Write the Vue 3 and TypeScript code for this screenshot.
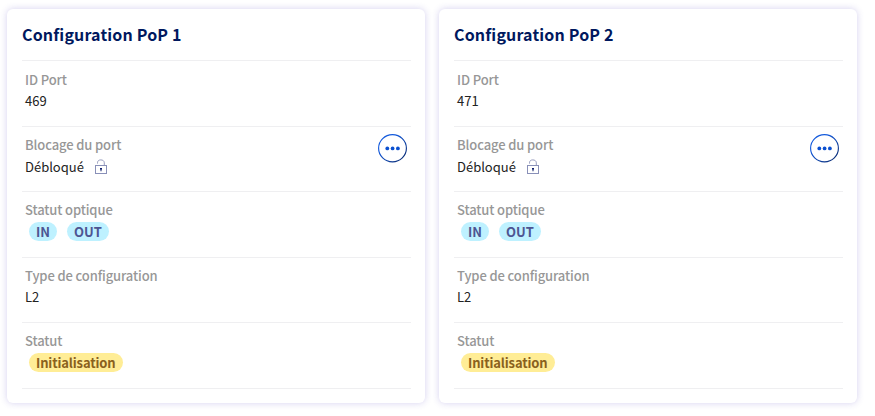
<script setup lang="ts">
interface PopConfig {
  name: string
  portId: string
}

const configs: PopConfig[] = [
  { name: 'Configuration PoP 1', portId: '469' },
  { name: 'Configuration PoP 2', portId: '471' },
]
</script>

<template>
  <main class="board">
    <section v-for="config in configs" :key="config.name" class="card">
      <h2 class="title">{{ config.name }}</h2>
      <dl class="rows">
        <div class="row">
          <div class="field">
            <dt>ID Port</dt>
            <dd>{{ config.portId }}</dd>
          </div>
        </div>
        <div class="row">
          <div class="field">
            <dt>Blocage du port</dt>
            <dd class="state">
              <span>Débloqué</span>
              <svg class="lock" width="14" height="16" viewBox="0 0 14 16" fill="none">
                <path d="M3.5 4.6V3.8C3.5 1.9 4.8.9 6.8.9s3.5 1.1 3.5 2.9V6" stroke="#8b91b8" stroke-width=".9" />
                <rect x="1.5" y="6.5" width="11" height="8" stroke="#8990b8" />
                <path d="M6 9h2v1.6h-.5v1.7h-1v-1.7H6z" fill="#10206e" />
              </svg>
            </dd>
          </div>
          <button class="more" type="button" aria-label="Actions">
            <svg width="29" height="29" viewBox="0 0 29 29">
              <defs>
                <linearGradient id="ring" x1="0" y1="0" x2="1" y2="1">
                  <stop offset=".3" stop-color="#1259dc" />
                  <stop offset="1" stop-color="#0a2766" />
                </linearGradient>
              </defs>
              <ellipse cx="14.5" cy="14.2" rx="13.9" ry="13.6" fill="#fff" stroke="url(#ring)" stroke-width="1.15" />
              <g fill="#0b50d0">
                <circle cx="9.3" cy="14.4" r="1.9" />
                <circle cx="14.6" cy="14.4" r="1.9" />
                <circle cx="19.9" cy="14.4" r="1.9" />
              </g>
            </svg>
          </button>
        </div>
        <div class="row">
          <div class="field">
            <dt>Statut optique</dt>
            <dd class="badges">
              <span class="badge info">IN</span>
              <span class="badge info">OUT</span>
            </dd>
          </div>
        </div>
        <div class="row">
          <div class="field">
            <dt>Type de configuration</dt>
            <dd>L2</dd>
          </div>
        </div>
        <div class="row">
          <div class="field">
            <dt>Statut</dt>
            <dd class="badges"><span class="badge warning">Initialisation</span></dd>
          </div>
        </div>
      </dl>
    </section>
  </main>
</template>

<style>
body {
  margin: 0;
  background: #fff;
}
</style>

<style scoped>
.board {
  box-sizing: border-box;
  height: 416px;
  padding: 9px 0 13px 7px;
  display: flex;
  gap: 14px;
  overflow: hidden;
  font-family: "Noto Sans CJK SC", "Noto Sans", sans-serif;
}
.card {
  box-sizing: border-box;
  width: 418px;
  height: 394px;
  padding: 0 14px 0 15px;
  background: #fff;
  border-radius: 6px;
  box-shadow: 0 0 7px rgba(75, 60, 190, .24);
}
.title {
  box-sizing: border-box;
  height: 51px;
  margin: 0;
  font-size: 16px;
  letter-spacing: .16px;
  line-height: 50px;
  font-weight: 700;
  color: #00185e;
}
.rows {
  margin: 0;
  border-bottom: 1px solid #efeff1;
}
.row {
  box-sizing: border-box;
  height: 65.6px;
  padding: 7px 4px 0 3px;
  border-top: 1px solid #efeff1;
  display: flex;
  justify-content: space-between;
  align-items: flex-start;
}
.row:first-child {
  padding-top: 7.5px;
}
dt {
  height: 21.5px;
  line-height: 21px;
  font-size: 13px;
  letter-spacing: -.12px;
  font-weight: 500;
  color: #979797;
}
dd {
  height: 22px;
  margin: 0;
  display: flex;
  align-items: center;
  font-size: 13px;
  line-height: 22px;
  color: #222;
}
.state {
  margin-top: .6px;
}
.lock {
  margin-left: 10.5px;
}
.more {
  width: 29px;
  height: 29px;
  padding: 0;
  border: 0;
  background: none;
}
.more svg {
  display: block;
}
.badges {
  padding-left: 4px;
  gap: 10px;
}
.badge {
  height: 19px;
  padding: 0 7px;
  border-radius: 10px;
  font-size: 13px;
  line-height: 19px;
  font-weight: 700;
}
.info {
  background: #bef1ff;
  color: #4d5592;
}
.warning {
  letter-spacing: -.14px;
  background: #ffed96;
  color: #8a611d;
}
</style>
